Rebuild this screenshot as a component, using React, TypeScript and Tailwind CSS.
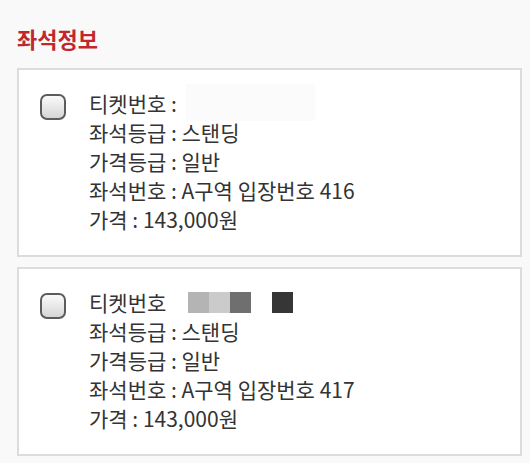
import React from "react";

const font = { fontFamily: '"Noto Sans CJK KR", "Noto Sans", sans-serif' };

function Checkbox() {
  return (
    <div className="mt-[5px] h-[26px] w-[26px] shrink-0 rounded-[7px] border-2 border-[#5c5c5c] bg-linear-to-b from-[#fafafa] to-[#d6d6d6]" />
  );
}

type Ticket = { seat: string; first: boolean };

function Card({ seat, first }: Ticket) {
  return (
    <div className="flex w-[505px] border-2 border-[#dcdcdc] bg-white pl-[21px] pt-[19px] pb-[21px]">
      <Checkbox />
      <div className="ml-[23px] flex flex-col text-[21px] leading-[29px] text-[#333333]">
        <div className="relative flex items-center">
          {first ? (
            <>
              <span>티켓번호 :</span>
              <div className="absolute left-[97px] top-[-5px] h-[37px] w-[129px] bg-[#fbfbfb]" />
            </>
          ) : (
            <>
              <span>티켓번호</span>
              <div className="ml-[22px] flex h-[21px] items-stretch">
                <div className="w-[21px] bg-[#b4b4b4]" />
                <div className="w-[21px] bg-[#cbcbcb]" />
                <div className="w-[21px] bg-[#6f6f6f]" />
                <div className="ml-[21px] w-[21px] bg-[#363636]" />
              </div>
            </>
          )}
        </div>
        <div>좌석등급 : 스탠딩</div>
        <div>가격등급 : 일반</div>
        <div>좌석번호 : A구역 입장번호 {seat}</div>
        <div>가격 : 143,000원</div>
      </div>
    </div>
  );
}

export default function App() {
  return (
    <div className="min-h-[463px] w-[530px] bg-[#f9f9f9] pl-[17px] pt-[24px]" style={font}>
      <h2 className="text-[22px] font-bold leading-[29px] text-[#c0282d]">좌석정보</h2>
      <div className="mt-[15px] flex flex-col gap-[10px]">
        <Card seat="416" first={true} />
        <Card seat="417" first={false} />
      </div>
    </div>
  );
}
